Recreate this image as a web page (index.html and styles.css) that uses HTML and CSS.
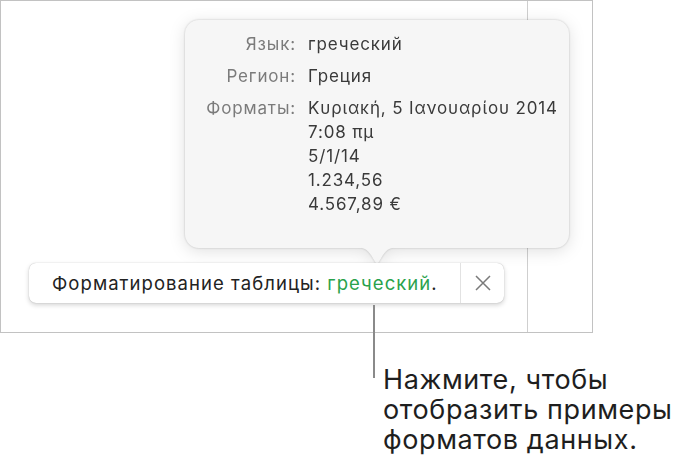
FILE: index.html
```html
<!DOCTYPE html>
<html lang="ru">
<head>
<meta charset="utf-8">
<link rel="stylesheet" href="styles.css">
</head>
<body>
<div class="page">
  <div class="frame">
    <div class="canvas"></div>
    <div class="side"></div>

    <div class="popover">
      <div class="pop-body">
        <div class="label">Язык:</div>
        <div class="value">греческий</div>
        <div class="label">Регион:</div>
        <div class="value">Греция</div>
        <div class="label">Форматы:</div>
        <div class="value formats">
          <div>Κυριακή, 5 Ιανουαρίου 2014</div>
          <div>7:08 πμ</div>
          <div>5/1/14</div>
          <div>1.234,56</div>
          <div>4.567,89 €</div>
        </div>
      </div>
      <svg class="arrow" width="48" height="20" viewBox="0 0 48 20">
        <path d="M0 0 C10 0 14 2 18 8 L24 18 L30 8 C34 2 38 0 48 0 Z" fill="#f6f6f6"/>
      </svg>
    </div>

    <div class="banner">
      <div class="banner-text">Форматирование таблицы: <span class="green">греческий</span>.</div>
      <div class="close">
        <svg width="16" height="16" viewBox="0 0 16 16">
          <path d="M1 1 L15 15 M15 1 L1 15" stroke="#7a7a7a" stroke-width="1.5" fill="none"/>
        </svg>
      </div>
    </div>

    <div class="leader"></div>
  </div>

  <div class="callout">Нажмите, чтобы<br>отобразить примеры<br>форматов данных.</div>
</div>
</body>
</html>
```

FILE: styles.css
```css
html, body {
  margin: 0;
  padding: 0;
  background: #ffffff;
}
body {
  font-family: Inter, Roboto, "Liberation Sans", sans-serif;
  color: #222;
}
.page {
  width: 684px;
  height: 473px;
  position: relative;
}
.frame {
  position: relative;
  width: 591px;
  height: 331px;
  border: 1px solid #c2c2c2;
  display: flex;
}
.canvas {
  flex: 1;
}
.side {
  width: 64px;
  border-left: 1px solid #cfcfcf;
}

.popover {
  position: absolute;
  left: 184px;
  top: 19px;
  width: 384px;
  height: 228px;
  background: #f6f6f6;
  border-radius: 14px;
  filter: drop-shadow(0 0 1px rgba(0,0,0,0.2)) drop-shadow(0 3px 8px rgba(0,0,0,0.12));
}
.pop-body {
  display: grid;
  grid-template-columns: 111px auto;
  column-gap: 12px;
  row-gap: 8px;
  padding-top: 12px;
  font-size: 17px;
  line-height: 24px;
  letter-spacing: 0.85px;
}
.label {
  text-align: right;
  color: #7b7b7b;
}
.value {
  color: #3a3a3a;
}
.arrow {
  position: absolute;
  left: 168px;
  top: 227px;
  display: block;
}

.banner {
  position: absolute;
  left: 28px;
  top: 262px;
  width: 475px;
  height: 40px;
  background: #ffffff;
  border-radius: 7px;
  box-shadow: 0 0 1px rgba(0,0,0,0.3), 0 2px 5px rgba(0,0,0,0.18);
  display: flex;
  align-items: center;
}
.banner-text {
  flex: 1;
  padding-left: 23px;
  font-size: 18.5px;
  letter-spacing: 1.05px;
  color: #222;
}
.green {
  color: #2aa24b;
}
.close {
  width: 43px;
  height: 40px;
  border-left: 1px solid #e2e2e2;
  display: flex;
  align-items: center;
  justify-content: center;
}
.close svg {
  display: block;
}

.leader {
  position: absolute;
  left: 372px;
  top: 304px;
  width: 1.5px;
  height: 73px;
  background: #8a8a8a;
  z-index: 2;
}

.callout {
  margin-left: 383px;
  margin-top: 32px;
  font-size: 27px;
  line-height: 30px;
  letter-spacing: 0.6px;
  color: #1e1e1e;
}
```
